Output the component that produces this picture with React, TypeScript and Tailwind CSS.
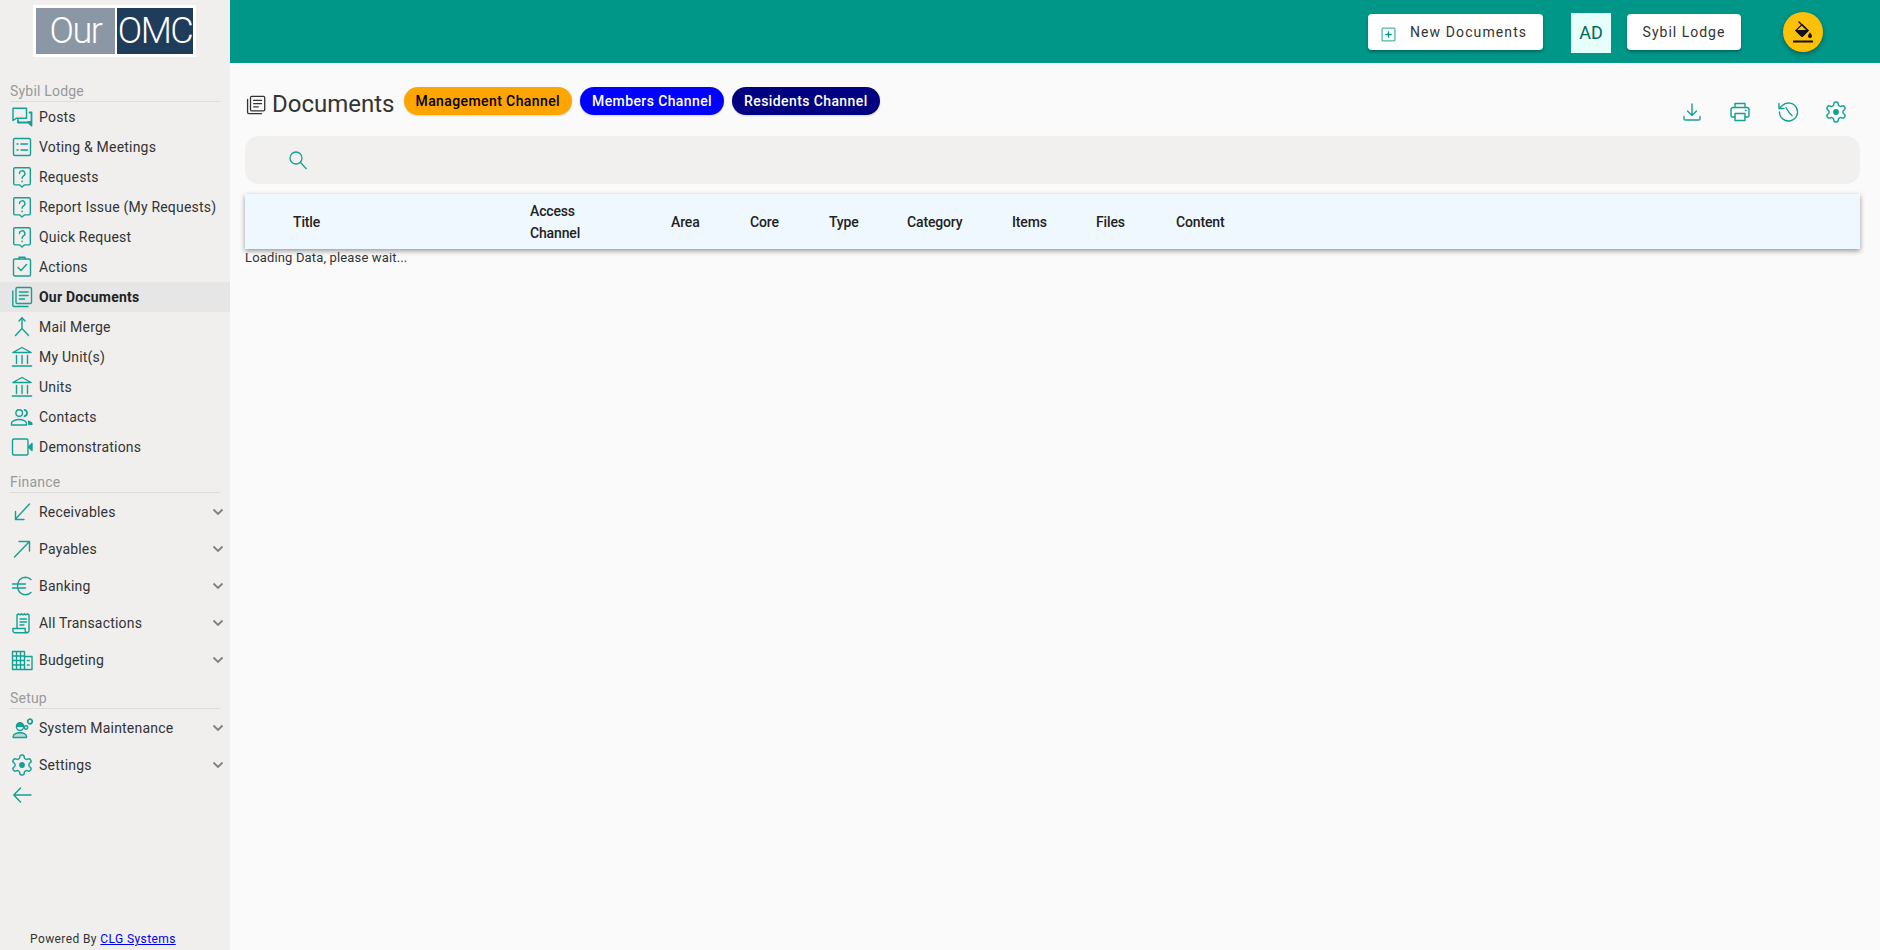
import React from "react";

const S = ({ children, size = 24, className = "text-[#14a092]" }: { children: React.ReactNode; size?: number; className?: string }) => (
  <svg width={size} height={size} viewBox="0 0 24 24" fill="none" stroke="currentColor" strokeWidth={1.4} strokeLinecap="round" strokeLinejoin="round" className={"shrink-0 " + className}>
    {children}
  </svg>
);

const gear = "M12.22 2h-.44a2 2 0 0 0-2 2v.18a2 2 0 0 1-1 1.73l-.43.25a2 2 0 0 1-2 0l-.15-.08a2 2 0 0 0-2.73.73l-.22.38a2 2 0 0 0 .73 2.73l.15.1a2 2 0 0 1 1 1.72v.51a2 2 0 0 1-1 1.74l-.15.09a2 2 0 0 0-.73 2.73l.22.38a2 2 0 0 0 2.73.73l.15-.08a2 2 0 0 1 2 0l.43.25a2 2 0 0 1 1 1.73V20a2 2 0 0 0 2 2h.44a2 2 0 0 0 2-2v-.18a2 2 0 0 1 1-1.73l.43-.25a2 2 0 0 1 2 0l.15.08a2 2 0 0 0 2.73-.73l.22-.39a2 2 0 0 0-.73-2.73l-.15-.08a2 2 0 0 1-1-1.74v-.5a2 2 0 0 1 1-1.74l.15-.09a2 2 0 0 0 .73-2.73l-.22-.38a2 2 0 0 0-2.73-.73l-.15.08a2 2 0 0 1-2 0l-.43-.25a2 2 0 0 1-1-1.73V4a2 2 0 0 0-2-2z";

const Posts = () => (
  <S>
    <path d="M3 3.2h13.500v10H6.500L3 15.500z" />
    <path d="M19.500 7.500h2v13l-3-3H8V15" strokeWidth={1.800} />
    <path d="M17 16h4.500v3.500z" fill="currentColor" stroke="none" />
  </S>
);
const Voting = () => (
  <S>
    <rect x="3.500" y="3.500" width="17" height="17" rx="1.500" />
    <path d="M7 9h1M7 15h1M11 9h6.500M11 15h6.500" strokeWidth={1.500} />
  </S>
);
const Ask = () => (
  <S>
    <path d="M5 2.800h14a1.300 1.300 0 0 1 1.300 1.300v14.500a1.300 1.300 0 0 1-1.300 1.300h-4.700L12 22l-2.300-2.100H5a1.300 1.300 0 0 1-1.300-1.300V4.100A1.300 1.300 0 0 1 5 2.800z" />
    <path d="M9.500 8.500a2.700 2.700 0 1 1 4 2.400c-1 .6-1.400 1.100-1.400 2.300" />
    <path d="M12.100 16.200v.4" strokeWidth={1.600} />
  </S>
);
const Actions = () => (
  <S>
    <rect x="3.500" y="4" width="17" height="17" rx="1.500" />
    <path d="M9 4V2.300h6V4" />
    <path d="M8 12.500l3 3 5.500-6" />
  </S>
);
const Docs = ({ className, size }: { className?: string; size?: number }) => (
  <S className={className} size={size}>
    <rect x="6" y="2.500" width="15.500" height="16" rx="1.300" />
    <path d="M2.800 6v14a1.500 1.500 0 0 0 1.500 1.500H18" />
    <path d="M9.500 7h8.500M9.500 10.500h8.500M9.500 14h5" strokeWidth={1.500} />
  </S>
);
const Merge = () => (
  <S>
    <path d="M9 6l3-3.200L15 6" />
    <path d="M12 3v10.500L5.500 20.500M12 13.500l6.500 7" />
  </S>
);
const Bank = () => (
  <S>
    <path d="M2.800 7.500L12 2.500l9.200 5z" />
    <path d="M6.500 10.500v8M12 10.500v8M17.500 10.500v8" />
    <path d="M2.500 21h19" strokeWidth={1.600} />
  </S>
);
const Contacts = () => (
  <S>
    <circle cx="9.200" cy="8" r="3.300" />
    <path d="M14.500 4.800a3.300 3.300 0 0 1 0 6.400" strokeWidth={1.800} />
    <path d="M1.500 20v-1.500c0-2.500 4-4 7.700-4s7.300 1.500 7.300 4V20z" />
    <path d="M17.800 15.500c2.500.5 4.700 1.700 4.700 3V20h-4.300z" fill="currentColor" stroke="none" />
  </S>
);
const Video = () => (
  <S>
    <rect x="2.500" y="4" width="15.500" height="16" rx="1.500" />
    <path d="M18.500 12l3.500-3.500v7z" fill="currentColor" />
  </S>
);
const SouthWest = () => (
  <S>
    <path d="M19.500 4L5.500 19M5.500 11.500v8h8.500" />
  </S>
);
const NorthEast = () => (
  <S>
    <path d="M4.500 20L19 5M9 4.500h10.500v9.500" />
  </S>
);
const Euro = () => (
  <S>
    <path d="M21 5.500A9 9 0 0 0 15.500 3.200C10.700 3.200 7.500 7 7.500 12s3.200 8.800 8 8.800c2 0 4-.8 5.500-2.300" />
    <path d="M2.500 10h13M2.500 14h13" />
  </S>
);
const Receipt = () => (
  <S>
    <path d="M7 17.500V3.800l1.500-1 1.500 1 1.500-1 1.500 1 1.500-1 1.500 1 1.500-1 1.500 1v15.500a2.300 2.300 0 0 1-2.300 2.400H5.200a2.300 2.300 0 0 1-2.300-2.500v-1.700h12.300v1.700a2.300 2.300 0 0 0 2.300 2.500" />
    <path d="M10 8h6.500M10 11h6.500M10 14h4" />
  </S>
);
const Budget = () => (
  <S>
    <path d="M2.500 21.500V3.500h12v18zM2.500 8h12M2.500 12.500h12M2.500 17h12M6.500 3.500v18M10.500 3.500v18" />
    <path d="M14.500 8.500h7.500v13h-7.500" />
    <path d="M17.500 12.500h1.500M17.500 17h1.500" strokeWidth={1.700} />
  </S>
);
const SysMaint = () => (
  <S>
    <path d="M3.200 21.500v-1.300c0-2 3.600-3.500 6.800-3.500s6.500 1.500 6.500 3.500v1.300z" fill="currentColor" fillOpacity={0.25} />
    <circle cx="10" cy="11" r="3.500" />
    <path d="M6.500 10.200a3.500 3.500 0 0 1 7 0z" fill="currentColor" />
    <circle cx="20" cy="5.500" r="2.300" strokeWidth={1.700} strokeDasharray="1.800 .7" />
    <circle cx="16" cy="11.500" r="1.700" strokeWidth={1.500} />
  </S>
);
const Cog = ({ size = 24 }: { size?: number }) => (
  <S size={size}>
    <path d={gear} />
    <circle cx="12" cy="12" r="2.900" fill="currentColor" stroke="none" />
  </S>
);
const Back = () => (
  <S>
    <path d="M21 12H4M10.500 5L3.800 12l6.700 7" />
  </S>
);
const Chevron = () => (
  <svg width="12" height="8" viewBox="0 0 12 8" fill="none" stroke="#808080" strokeWidth={1.800} className="shrink-0">
    <path d="M1.500 1.500L6 6l4.500-4.500" />
  </svg>
);

const Label = ({ text }: { text: string }) => (
  <div className="h-[31px] mx-[10px] flex items-end pb-[2px] border-b border-[#dddcdb] text-[14px] leading-[16px] tracking-[0.2px] text-[#999]">{text}</div>
);

const Item = ({ icon, text, active }: { icon: React.ReactNode; text: string; active?: boolean }) => (
  <div className={"h-[30px] flex items-center pl-[10px] gap-[5px] text-[14px] tracking-[0.2px] " + (active ? "bg-[#e6e6e6] font-bold text-[#222]" : "text-[#333]")}>
    {icon}
    <span>{text}</span>
  </div>
);

const Expand = ({ icon, text }: { icon: React.ReactNode; text: string }) => (
  <div className="h-[37px] flex items-center pl-[10px] pr-[6px] gap-[5px] text-[14px] tracking-[0.2px] text-[#333]">
    {icon}
    <span className="mt-[1px]">{text}</span>
    <span className="ml-auto flex">
      <Chevron />
    </span>
  </div>
);

const Chip = ({ text, className }: { text: string; className: string }) => (
  <div className={"h-[28px] mt-[24px] px-[12px] rounded-full flex items-center text-[14px] font-medium tracking-[0.4px] shadow-[0_1px_2px_rgba(0,0,0,0.15)] " + className}>{text}</div>
);

const cols: [string, string][] = [
  ["Title", "w-[237px]"],
  ["Access Channel", "w-[141px] pr-[60px]"],
  ["Area", "w-[79px]"],
  ["Core", "w-[79px]"],
  ["Type", "w-[78px]"],
  ["Category", "w-[105px]"],
  ["Items", "w-[84px]"],
  ["Files", "w-[80px]"],
  ["Content", "w-[80px]"],
];

const btn = "h-[36px] bg-white rounded-[4px] flex items-center text-[14px] text-[#333] shadow-[0_2px_3px_rgba(0,0,0,0.3)]";

export default function App() {
  return (
    <div className="flex h-screen bg-[#fafafa] font-['Roboto',sans-serif] overflow-hidden">
      <aside className="w-[230px] shrink-0 bg-[#f0efee] flex flex-col">
        <div className="h-[71px] pt-[5px] pl-[33px]">
          <div className="w-[163px] h-[52px] bg-white p-[3px] flex gap-[2px] text-[36px] font-light leading-[46px] tracking-[-1.500px] text-white">
            <div className="w-[79px] bg-[#8b97a4] flex items-center justify-center">Our</div>
            <div className="w-[76px] bg-[#1f3d5a] flex items-center justify-center">OMC</div>
          </div>
        </div>
        <Label text="Sybil Lodge" />
        <Item icon={<Posts />} text="Posts" />
        <Item icon={<Voting />} text="Voting & Meetings" />
        <Item icon={<Ask />} text="Requests" />
        <Item icon={<Ask />} text="Report Issue (My Requests)" />
        <Item icon={<Ask />} text="Quick Request" />
        <Item icon={<Actions />} text="Actions" />
        <Item icon={<Docs />} text="Our Documents" active />
        <Item icon={<Merge />} text="Mail Merge" />
        <Item icon={<Bank />} text="My Unit(s)" />
        <Item icon={<Bank />} text="Units" />
        <Item icon={<Contacts />} text="Contacts" />
        <Item icon={<Video />} text="Demonstrations" />
        <Label text="Finance" />
        <Expand icon={<SouthWest />} text="Receivables" />
        <Expand icon={<NorthEast />} text="Payables" />
        <Expand icon={<Euro />} text="Banking" />
        <Expand icon={<Receipt />} text="All Transactions" />
        <Expand icon={<Budget />} text="Budgeting" />
        <Label text="Setup" />
        <Expand icon={<SysMaint />} text="System Maintenance" />
        <Expand icon={<Cog />} text="Settings" />
        <div className="h-[24px] pl-[10px] flex items-center">
          <Back />
        </div>
        <div className="mt-auto pl-[30px] pb-[4px] text-[12px] leading-[14px] tracking-[0.4px] text-[#333]">
          Powered By <a className="text-[#0000ee] underline">CLG Systems</a>
        </div>
      </aside>

      <main className="flex-1 min-w-0 flex flex-col">
        <header className="h-[63px] shrink-0 bg-[#009688] flex items-center justify-end pr-[57px] pt-[1px]">
          <div className={btn + " w-[175px] pl-[13px] tracking-[1.1px]"}>
            <svg width="15" height="15" viewBox="0 0 14 14" fill="none" stroke="#4db6ac" strokeWidth={1.200} className="mt-[4px] shrink-0">
              <rect x="1" y="1" width="12" height="12" rx="1" />
              <path d="M7 4v6M4 7h6" stroke="#009688" />
            </svg>
            <span className="ml-[14px]">New Documents</span>
          </div>
          <div className="w-[40px] h-[40px] ml-[28px] bg-[#e6fffa] flex items-center justify-center text-[18px] text-[#00695c] mt-[1px]">AD</div>
          <div className={btn + " w-[114px] ml-[16px] justify-center tracking-[1px]"}>Sybil Lodge</div>
          <div className="w-[40px] h-[40px] ml-[42px] rounded-full bg-[#ffc107] flex items-center justify-center shadow-[0_2px_5px_rgba(0,0,0,0.35)]">
            <svg width="24" height="24" viewBox="0 0 24 24" fill="none" stroke="#111">
              <path d="M7.500 1.500l8 8" strokeWidth={1.300} />
              <path d="M11 4.500l6.200 6L12 15.800c-.6.600-1.300.600-1.900 0L4.800 10.500z" strokeWidth={1.200} />
              <path d="M4.800 10.500h12.400L12 15.800c-.6.600-1.300.600-1.900 0z" fill="#111" strokeWidth={1} />
              <path d="M19 12.500s-2 2.200-2 3.600a2 2 0 0 0 4 0c0-1.400-2-3.600-2-3.600z" fill="#111" stroke="none" />
              <rect x="2" y="20.500" width="20" height="2" fill="#111" stroke="none" />
            </svg>
          </div>
        </header>

        <section className="px-[15px] pr-[20px] flex-1">
          <div className="h-[73px] flex items-start">
            <div className="mt-[31px] mr-[5px]">
              <Docs className="text-[#333]" size={22} />
            </div>
            <h1 className="mt-[25px] mr-[9px] text-[24px] leading-[32px] font-normal text-[#333]">Documents</h1>
            <Chip text="Management Channel" className="bg-[#ffa500] text-black" />
            <Chip text="Members Channel" className="ml-[8px] bg-[#0000ff] text-white" />
            <Chip text="Residents Channel" className="ml-[8px] bg-[#000080] text-white" />
            <div className="ml-auto mt-[37px] mr-[12px] flex gap-[24px]">
              <S>
                <path d="M12 4v11M7.500 11l4.500 4.500 4.500-4.500" />
                <path d="M4 16.500v2.200a1.300 1.300 0 0 0 1.300 1.300h13.400a1.300 1.300 0 0 0 1.300-1.300v-2.200" />
              </S>
              <S>
                <path d="M7 7.500V3.500h10v4" />
                <path d="M7 17H4.500A1.500 1.500 0 0 1 3 15.500v-6A2 2 0 0 1 5 7.500h14a2 2 0 0 1 2 2v6a1.500 1.500 0 0 1-1.500 1.500H17" />
                <rect x="7" y="13.500" width="10" height="7" />
                <path d="M17.500 10.500h.5" strokeWidth={1.500} />
              </S>
              <S>
                <path d="M3.500 12a9 9 0 1 0 2.800-6.500L3.500 8" />
                <path d="M3 3.500V8.500h5" />
                <path d="M10 7.500l3 5 3 3" />
              </S>
              <Cog />
            </div>
          </div>

          <div className="h-[48px] bg-[#f1f0ee] rounded-[14px] flex items-center pl-[43px]">
            <svg width="20" height="20" viewBox="0 0 20 20" fill="none" stroke="#14a092" strokeWidth={1.300} className="mb-[1px]">
              <circle cx="8" cy="8" r="6" />
              <path d="M12.500 12.500l6 6.500" />
            </svg>
          </div>

          <div className="mt-[10px] h-[55px] pl-[48px] bg-[#f0f8ff] flex items-center text-[14px] leading-[22px] font-medium tracking-[-0.15px] text-[#222] shadow-[0_2px_5px_rgba(0,0,0,0.4)]">
            {cols.map(([t, w]) => (
              <div key={t} className={"shrink-0 " + w}>{t}</div>
            ))}
          </div>
          <div className="mt-[1px] text-[13px] leading-[16px] tracking-[0.15px] text-[#333]">Loading Data, please wait...</div>
        </section>
      </main>
    </div>
  );
}
